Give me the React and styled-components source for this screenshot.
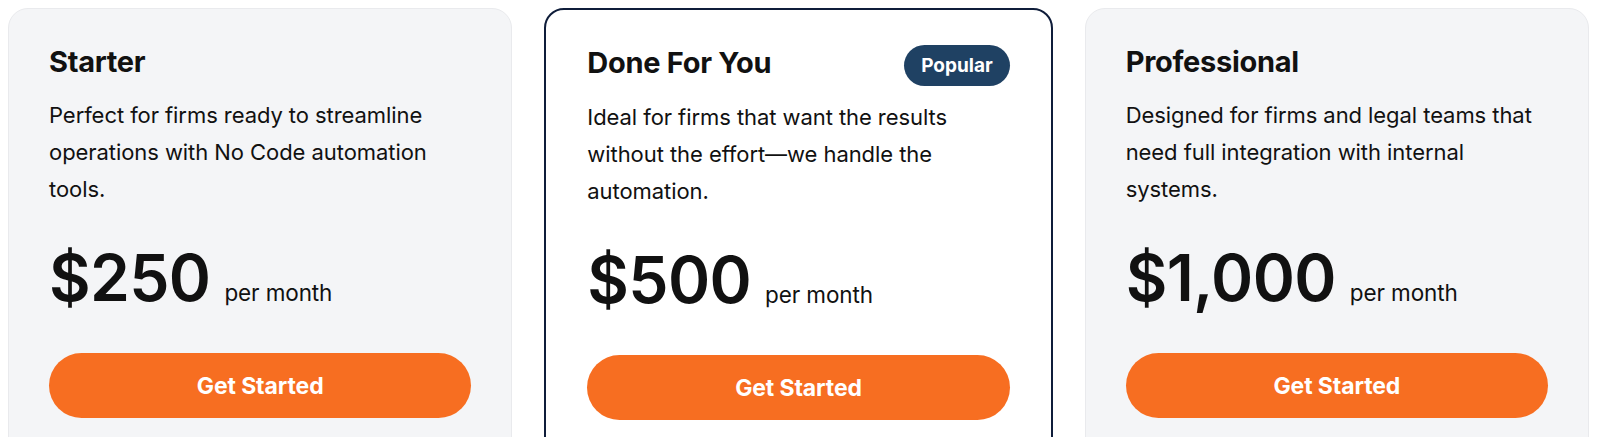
import React from "react";
import styled, { createGlobalStyle } from "styled-components";

const GlobalStyle = createGlobalStyle`
  html, body {
    margin: 0;
    padding: 0;
    background: #ffffff;
    overflow: hidden;
  }
  body {
    font-family: Inter, "Liberation Sans", Arial, sans-serif;
    color: #111111;
  }
`;

const Plans = styled.div`
  display: flex;
  gap: 32px;
  padding: 8px 11px 8px 8px;
`;

const Card = styled.div`
  box-sizing: border-box;
  flex: 1;
  min-width: 0;
  min-height: 480px;
  border-radius: 20px;
  background-color: ${(p) => (p.$featured ? "#ffffff" : "#f4f5f7")};
  border: ${(p) => (p.$featured ? "2px solid #0f1d3a" : "1px solid #e9eaed")};
  padding: ${(p) => (p.$featured ? "35px 41px" : "37px 40px")};
  display: flex;
  flex-direction: column;
`;

const Header = styled.div`
  display: flex;
  align-items: flex-start;
  justify-content: space-between;
`;

const Title = styled.h3`
  margin: ${(p) => (p.$featured ? "2px" : "0")} 0 0;
  font-size: 29px;
  line-height: 32px;
  font-weight: 700;
  letter-spacing: -0.01em;
`;

const Badge = styled.span`
  background-color: #1f4163;
  color: #ffffff;
  font-size: 19px;
  font-weight: 700;
  line-height: 41px;
  padding: 0 17px;
  border-radius: 21px;
`;

const Description = styled.p`
  margin: ${(p) => (p.$featured ? "13px" : "19px")} 0 0;
  font-size: 22px;
  line-height: 36.75px;
  letter-spacing: -0.003em;
`;

const PriceRow = styled.div`
  display: flex;
  align-items: baseline;
  gap: 14px;
  margin-top: 39px;
`;

const Amount = styled.span`
  font-size: 64px;
  line-height: 64px;
  font-weight: 600;
  letter-spacing: -0.01em;
`;

const Period = styled.span`
  font-size: 22.5px;
  letter-spacing: -0.005em;
`;

const CtaButton = styled.button`
  margin-top: 43px;
  height: 65px;
  width: 100%;
  border: none;
  border-radius: 33px;
  background-color: #f76e21;
  color: #ffffff;
  font-family: Inter, "Liberation Sans", Arial, sans-serif;
  font-size: 23px;
  font-weight: 700;
  letter-spacing: -0.005em;
  cursor: pointer;
`;

const plans = [
  {
    name: "Starter",
    text: "Perfect for firms ready to streamline operations with No Code automation tools.",
    price: "$250",
  },
  {
    name: "Done For You",
    text: "Ideal for firms that want the results without the effort\u2014we handle the automation.",
    price: "$500",
    featured: true,
  },
  {
    name: "Professional",
    text: "Designed for firms and legal teams that need full integration with internal systems.",
    price: "$1,000",
  },
];

const App = () => {
  return (
    <>
      <GlobalStyle />
      <Plans>
        {plans.map((plan) => (
          <Card key={plan.name} $featured={plan.featured}>
            <Header>
              <Title $featured={plan.featured}>{plan.name}</Title>
              {plan.featured && <Badge>Popular</Badge>}
            </Header>
            <Description $featured={plan.featured}>{plan.text}</Description>
            <PriceRow>
              <Amount>{plan.price}</Amount>
              <Period>per month</Period>
            </PriceRow>
            <CtaButton>Get Started</CtaButton>
          </Card>
        ))}
      </Plans>
    </>
  );
};

export default App;
